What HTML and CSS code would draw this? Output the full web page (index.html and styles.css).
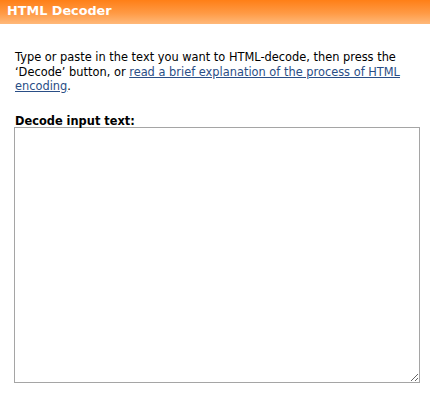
FILE: index.html
```html
<!DOCTYPE html>
<html>
<head>
<meta charset="utf-8">
<link rel="stylesheet" href="styles.css">
</head>
<body>
<div class="header">HTML Decoder</div>
<div class="content">
  <p class="intro">Type or paste in the text you want to HTML-decode, then press the ‘Decode’ button, or <a href="#">read a brief explanation of the process of HTML encoding</a>.</p>
  <label class="label" for="inp">Decode input text:</label>
  <textarea id="inp" class="input"></textarea>
</div>
</body>
</html>
```
FILE: styles.css
```css
html, body {
  margin: 0;
  padding: 0;
  background: #ffffff;
}
body {
  font-family: "DejaVu Sans", Verdana, sans-serif;
  font-size: 11.4px;
  color: #000;
}
.header {
  height: 24px;
  line-height: 22px;
  padding: 0 7px;
  color: #fff;
  font-weight: bold;
  font-size: 12.8px;
  background: linear-gradient(to bottom, #ff7f17 0%, #ff9a45 55%, #ffb97a 100%);
}
.content {
  padding: 26px 10px 0 15px;
}
.intro {
  margin: 0 0 21.5px 0;
  line-height: 14.5px;
}
.intro a {
  color: #2a4e86;
  text-decoration: underline;
}
.label {
  display: block;
  font-weight: bold;
  line-height: 12px;
}
.input {
  display: block;
  box-sizing: border-box;
  width: 406px;
  height: 256px;
  margin: 0 0 0 -1px;
  border: 1px solid #a5a5a5;
  padding: 2px;
  resize: both;
}
```
